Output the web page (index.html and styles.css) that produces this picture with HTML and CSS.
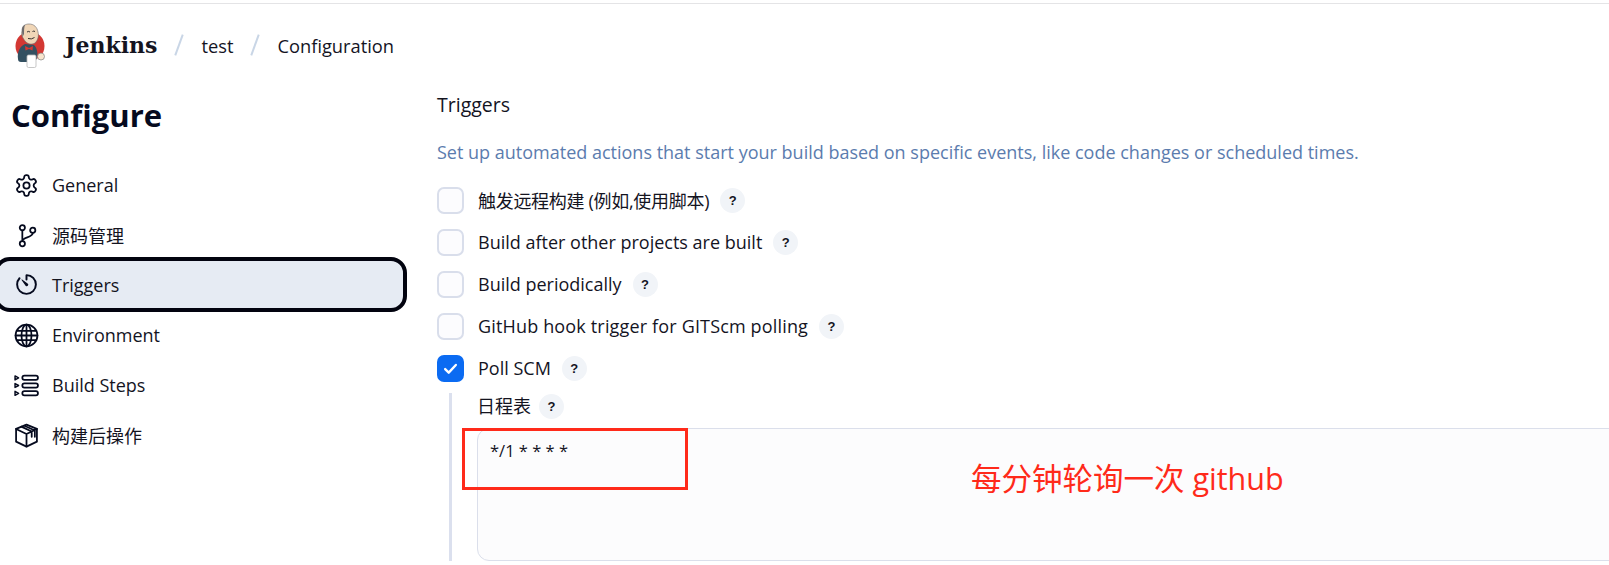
FILE: index.html
```html
<!DOCTYPE html>
<html lang="zh">
<head>
    <meta charset="UTF-8">
    <meta name="viewport" content="width=device-width, initial-scale=1.0">
    <title>test Configuration - Jenkins</title>
    <link rel="stylesheet" href="styles.css">
</head>
<body>
    <header class="topbar">
        <svg class="logo" viewBox="0 0 32 45">
            <circle cx="15" cy="23" r="14.500" fill="#d33833"/>
            <path d="M3 36 C2 29 5 23 10 21 L19 22 C22 25 23 30 22 35 L20 39 L6 39 C4 39 3 38 3 36 Z" fill="#335061"/>
            <path d="M7 8 C7 3 10 1 14 1 C19 1 22 4 23 9 C24 13 23 17 20 20 C17 22 13 21 11 19 C9 17 8 15 7 13 C6.500 11 6.500 9 7 8 Z" fill="#f0d6b7" stroke="#6d6b6d" stroke-width=".6"/>
            <path d="M7 8 C6.500 5 8 2.500 10 1.800 C9 4.500 9 8 9 11 L7.500 14 Z" fill="#6d6b6d"/>
            <path d="M12 9 q1.500 -1.200 3 0 M17.500 8.500 q1.200 -.8 2.500 0 M13 15.500 q3.500 1.300 6.500 -1" fill="none" stroke="#231f20" stroke-width=".9"/>
            <path d="M10 23 L14 25 L18 23 L17.500 27.500 L14 26 L10.500 27.500 Z" fill="#d33833"/>
            <rect x="12" y="32" width="9" height="12.500" rx="1.500" fill="#fff" stroke="#b9b9b9" stroke-width=".8"/>
            <circle cx="26" cy="33.500" r="3.500" fill="#f7e4cd" stroke="#818181" stroke-width=".7"/>
        </svg>
        <a class="brand">Jenkins</a>
        <span class="crumb-sep"></span>
        <a class="crumb">test</a>
        <span class="crumb-sep"></span>
        <a class="crumb">Configuration</a>
    </header>

    <div class="page">
        <aside class="sidebar">
            <h1>Configure</h1>
            <nav class="side-nav">
                <a class="side-item">
                    <svg class="side-icon" viewBox="0 0 24 24"><path d="M12.220 2h-.44a2 2 0 0 0-2 2v.18a2 2 0 0 1-1 1.730l-.43.25a2 2 0 0 1-2 0l-.15-.08a2 2 0 0 0-2.730.73l-.22.38a2 2 0 0 0 .73 2.730l.15.1a2 2 0 0 1 1 1.720v.51a2 2 0 0 1-1 1.740l-.15.09a2 2 0 0 0-.73 2.730l.22.38a2 2 0 0 0 2.730.73l.15-.08a2 2 0 0 1 2 0l.43.25a2 2 0 0 1 1 1.730V20a2 2 0 0 0 2 2h.44a2 2 0 0 0 2-2v-.18a2 2 0 0 1 1-1.730l.43-.25a2 2 0 0 1 2 0l.15.08a2 2 0 0 0 2.730-.73l.22-.39a2 2 0 0 0-.73-2.730l-.15-.08a2 2 0 0 1-1-1.740v-.5a2 2 0 0 1 1-1.740l.15-.09a2 2 0 0 0 .73-2.730l-.22-.38a2 2 0 0 0-2.730-.73l-.15.08a2 2 0 0 1-2 0l-.43-.25a2 2 0 0 1-1-1.730V4a2 2 0 0 0-2-2z"/><circle cx="12" cy="12" r="3"/></svg>
                    General
                </a>
                <a class="side-item">
                    <svg class="side-icon" viewBox="0 0 24 24"><circle cx="8" cy="4.500" r="2.500"/><circle cx="8" cy="20" r="2.500"/><circle cx="18" cy="7" r="2.500"/><path d="M8 7v10.500M18 9.500c0 4.500-10 4-10 8"/></svg>
                    源码管理
                </a>
                <a class="side-item active">
                    <svg class="side-icon" viewBox="0 0 512 512"><path stroke-width="40" d="M112.910 128A191.850 191.850 0 0064 254c-1.180 106.350 85.650 193.800 192 194 106.200.2 192-85.830 192-192 0-104.540-83.550-189.610-187.500-192a4.360 4.360 0 00-4.500 4.370V152"/><path fill="#050a1e" stroke="none" d="M233.380 278.630l-79-113a8.130 8.130 0 0111.320-11.320l113 79a32.500 32.500 0 01-37.250 53.260 33.210 33.210 0 01-8-7.940z"/></svg>
                    Triggers
                </a>
                <a class="side-item">
                    <svg class="side-icon" viewBox="0 0 24 24"><circle cx="12" cy="12" r="10.500"/><ellipse cx="12" cy="12" rx="4.800" ry="10.500"/><path d="M12 1.500v21M2.600 7.500h18.800M1.500 12h21M2.600 16.500h18.800"/></svg>
                    Environment
                </a>
                <a class="side-item">
                    <svg class="side-icon" viewBox="0 0 24 24"><rect x="8" y="2.500" width="15" height="4" rx="2"/><rect x="8" y="10" width="15" height="4" rx="2"/><rect x="8" y="17.500" width="15" height="4" rx="2"/><path class="step-mark" d="M1 2.800l3.400 1.900L1 6.600zM1 10.100l3.400 1.900L1 13.900zM1 17.600l3.400 1.900L1 21.400z"/></svg>
                    Build Steps
                </a>
                <a class="side-item">
                    <svg class="side-icon" viewBox="0 0 24 24"><path d="M12 1.500l10 4.200v12.200l-10 4.800-10-4.800V5.700z"/><path d="M2 5.700l10 4.800 10-4.800M12 10.500v12M7 3.500l10 4.700v5M10 2.600l10 4.600v6"/></svg>
                    构建后操作
                </a>
            </nav>
        </aside>

        <main class="content">
            <h2>Triggers</h2>
            <p class="section-desc">Set up automated actions that start your build based on specific events, like code changes or scheduled times.</p>

            <div class="check-row">
                <span class="checkbox"></span>
                <label class="label-tight">触发远程构建 (例如,使用脚本)</label>
                <span class="help">?</span>
            </div>
            <div class="check-row">
                <span class="checkbox"></span>
                <label>Build after other projects are built</label>
                <span class="help">?</span>
            </div>
            <div class="check-row">
                <span class="checkbox"></span>
                <label>Build periodically</label>
                <span class="help">?</span>
            </div>
            <div class="check-row">
                <span class="checkbox"></span>
                <label class="label-wide">GitHub hook trigger for GITScm polling</label>
                <span class="help">?</span>
            </div>
            <div class="check-row">
                <span class="checkbox checked">
                    <svg viewBox="0 0 16 16"><path d="M3.500 8.500l3 3 6-6.500"/></svg>
                </span>
                <label>Poll SCM</label>
                <span class="help">?</span>
            </div>

            <div class="sub-form">
                <div class="field-label">
                    <label>日程表</label>
                    <span class="help">?</span>
                </div>
                <div class="schedule-wrap">
                    <textarea class="schedule" spellcheck="false">*/1 * * * *</textarea>
                    <div class="mark-box"></div>
                    <div class="mark-text">每分钟轮询一次 github</div>
                </div>
            </div>
        </main>
    </div>
</body>
</html>
```

FILE: styles.css
```css
* {
    box-sizing: border-box;
}
html, body {
    height: 565px;
    overflow: hidden;
}
body {
    margin: 0;
    background-color: white;
    color: #14141f;
    font-family: "Open Sans", "Noto Sans CJK SC", sans-serif;
    font-size: 18px;
    border-top: 3px solid #fff;
}
.topbar {
    display: flex;
    align-items: center;
    height: 81px;
    padding: 2px 0 0 15px;
    border-top: 1px solid #e4e4e6;
}
.logo {
    width: 32px;
    height: 45px;
    margin-right: 18px;
}
.brand {
    font-family: "DejaVu Serif", serif;
    font-weight: bold;
    font-size: 22px;
    color: #14141f;
}
.crumb-sep {
    width: 2px;
    height: 22px;
    margin: 0 21px;
    background-color: #c9d6e6;
    transform: rotate(20deg);
}
.crumb {
    font-size: 18.300px;
}
.page {
    display: flex;
}
.sidebar {
    width: 437px;
    flex-shrink: 0;
}
h1 {
    margin: 11px 0 24px 11px;
    font-size: 31px;
    line-height: 41px;
    font-weight: 700;
    color: #050a1e;
}
.side-nav {
    display: flex;
    flex-direction: column;
}
.side-item {
    display: flex;
    align-items: center;
    gap: 13px;
    height: 50px;
    padding-left: 14px;
    color: #14141f;
}
.side-icon {
    width: 25px;
    height: 25px;
    flex-shrink: 0;
    fill: none;
    stroke: #050a1e;
    stroke-width: 1.700;
    stroke-linecap: round;
    stroke-linejoin: round;
}
.step-mark {
    stroke-width: 1.400;
}
.active {
    width: 413px;
    height: 55px;
    margin: -3px 0 -2px -6px;
    padding-left: 16px;
    background-color: #e6ebf3;
    border: 4px solid #02030f;
    border-radius: 16px;
}
.content {
    flex: 1;
    min-width: 0;
}
h2 {
    margin: 7px 0 0;
    font-size: 19.500px;
    line-height: 28px;
    font-weight: 500;
    color: #14141f;
}
.section-desc {
    margin: 19px 0 13px;
    font-size: 18px;
    line-height: 28px;
    color: #5b7cae;
}
.check-row {
    display: flex;
    align-items: center;
    height: 42px;
}
.label-tight {
    letter-spacing: -0.300px;
}
.label-wide {
    letter-spacing: 0.160px;
}
.checkbox {
    display: flex;
    align-items: center;
    justify-content: center;
    width: 27px;
    height: 27px;
    margin-right: 14px;
    background-color: #fcfcfe;
    border: 2px solid #d9deeb;
    border-radius: 7px;
}
.checked {
    background-color: #0b6bf2;
    border-color: #0b6bf2;
}
.checked svg {
    width: 19px;
    height: 19px;
    fill: none;
    stroke: white;
    stroke-width: 2;
    stroke-linecap: round;
    stroke-linejoin: round;
}
.help {
    display: flex;
    align-items: center;
    justify-content: center;
    width: 25px;
    height: 25px;
    margin-left: 11px;
    background-color: #f1f4f8;
    border-radius: 50%;
    font-family: "Liberation Sans", sans-serif;
    font-size: 13px;
    font-weight: 700;
    color: #14141f;
}
.sub-form {
    margin: 4px 0 0 12px;
    padding-left: 25px;
    border-left: 3px solid #dbe0ee;
}
.field-label {
    display: flex;
    align-items: flex-start;
    height: 35px;
    padding-top: 1px;
    line-height: 25px;
}
.field-label .help {
    margin-left: 8px;
}
.schedule-wrap {
    position: relative;
}
.schedule {
    display: block;
    width: 1200px;
    height: 133px;
    padding: 8px 12px;
    background-color: #fcfcfd;
    border: 1px solid #dbdfeb;
    border-radius: 12px;
    outline: none;
    resize: none;
    font-family: inherit;
    font-size: 16.500px;
    line-height: 28px;
    color: #14141f;
}
.mark-box {
    position: absolute;
    left: -15px;
    top: 0;
    width: 226px;
    height: 62px;
    border: 3px solid #ff2a1a;
}
.mark-text {
    position: absolute;
    left: 494px;
    top: 30px;
    font-family: "Open Sans", "Noto Sans CJK SC", sans-serif;
    font-size: 30.500px;
    line-height: 40px;
    color: #ff2a1a;
    white-space: nowrap;
}
```
